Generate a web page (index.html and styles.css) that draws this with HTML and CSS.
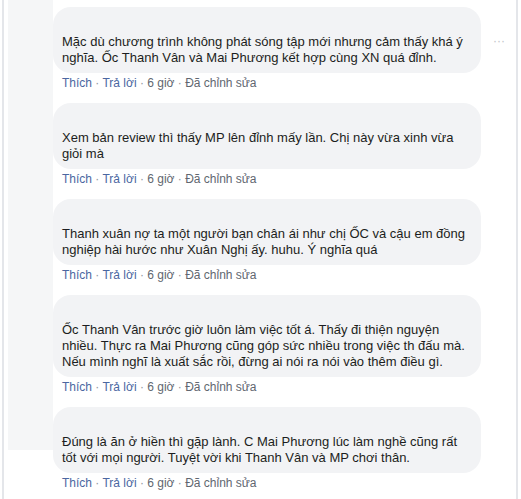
FILE: index.html
```html
<!DOCTYPE html>
<html lang="vi">

<head>
    <meta charset="UTF-8">
    <meta name="viewport" content="width=device-width, initial-scale=1.0">
    <title>Bình luận</title>
    <link rel="stylesheet" href="styles.css">
</head>

<body>
    <div class="panel">
        <div class="side"></div>

        <div class="comments">
            <div class="comment">
                <div class="row">
                    <div class="bubble">
                        <div class="name"></div>
                        <p>Mặc dù chương trình không phát sóng tập mới nhưng cảm thấy khá ý nghĩa. Ốc Thanh Vân và Mai Phương kết hợp cùng XN quá đỉnh.</p>
                    </div>
                    <span class="more">···</span>
                </div>
                <div class="actions">
                    <a href="#">Thích</a> · <a href="#">Trả lời</a> · <span class="time">6 giờ</span> · <span class="edited">Đã chỉnh sửa</span>
                </div>
            </div>

            <div class="comment">
                <div class="row">
                    <div class="bubble">
                        <div class="name"></div>
                        <p>Xem bản review thì thấy MP lên đỉnh mấy lần. Chị này vừa xinh vừa giỏi mà</p>
                    </div>
                </div>
                <div class="actions">
                    <a href="#">Thích</a> · <a href="#">Trả lời</a> · <span class="time">6 giờ</span> · <span class="edited">Đã chỉnh sửa</span>
                </div>
            </div>

            <div class="comment">
                <div class="row">
                    <div class="bubble">
                        <div class="name"></div>
                        <p>Thanh xuân nợ ta một người bạn chân ái như chị ỐC và cậu em đồng nghiệp hài hước như Xuân Nghị ấy. huhu. Ý nghĩa quá</p>
                    </div>
                </div>
                <div class="actions">
                    <a href="#">Thích</a> · <a href="#">Trả lời</a> · <span class="time">6 giờ</span> · <span class="edited">Đã chỉnh sửa</span>
                </div>
            </div>

            <div class="comment">
                <div class="row">
                    <div class="bubble">
                        <div class="name"></div>
                        <p>Ốc Thanh Vân trước giờ luôn làm việc tốt á. Thấy đi thiện nguyện nhiều. Thực ra Mai Phương cũng góp sức nhiều trong việc th đấu mà. Nếu mình nghĩ là xuất sắc rồi, đừng ai nói ra nói vào thêm điều gì.</p>
                    </div>
                </div>
                <div class="actions">
                    <a href="#">Thích</a> · <a href="#">Trả lời</a> · <span class="time">6 giờ</span> · <span class="edited">Đã chỉnh sửa</span>
                </div>
            </div>

            <div class="comment">
                <div class="row">
                    <div class="bubble">
                        <div class="name"></div>
                        <p>Đúng là ăn ở hiền thì gặp lành. C Mai Phương lúc làm nghề cũng rất tốt với mọi người. Tuyệt vời khi Thanh Vân và MP chơi thân.</p>
                    </div>
                </div>
                <div class="actions">
                    <a href="#">Thích</a> · <a href="#">Trả lời</a> · <span class="time">6 giờ</span> · <span class="edited">Đã chỉnh sửa</span>
                </div>
            </div>

            <div class="reply-box"></div>
        </div>
    </div>
</body>

</html>
```

FILE: styles.css
```css
body {
    margin: 0;
    background: #ffffff;
    font-family: "Liberation Sans", Arial, sans-serif;
    color: #1c1e21;
}

.panel {
    display: flex;
    margin: 0 3px 0 2px;
    padding-left: 4px;
    height: 499px;
    border-left: 2px solid #e4e6ea;
    border-right: 2px solid #e4e6ea;
    overflow: hidden;
}

.side {
    width: 45px;
    height: 450px;
    background: #f5f6f7;
    flex-shrink: 0;
}

.comments {
    flex: 1;
    padding-top: 7px;
}

.row {
    display: flex;
    align-items: flex-start;
}

.bubble {
    width: 409px;
    padding: 8px 10px 7px 9px;
    background: #f2f3f5;
    border-radius: 18px;
}

.name {
    height: 19px;
}

.bubble p {
    margin: 0;
    font-size: 13px;
    line-height: 16px;
}

.more {
    margin: 27px 0 0 12px;
    color: #bec3c9;
    font-size: 12px;
    letter-spacing: 0;
}

.actions {
    padding: 2px 0 0 9px;
    margin-bottom: 12px;
    font-size: 12px;
    line-height: 16px;
    color: #90949c;
}

.actions a {
    color: #4b67a1;
    text-decoration: none;
}

.actions .time,
.actions .edited {
    color: #616770;
}

.reply-box {
    margin: 3px 11px 0 274px;
    border-top: 1px solid #eceef1;
}
```
